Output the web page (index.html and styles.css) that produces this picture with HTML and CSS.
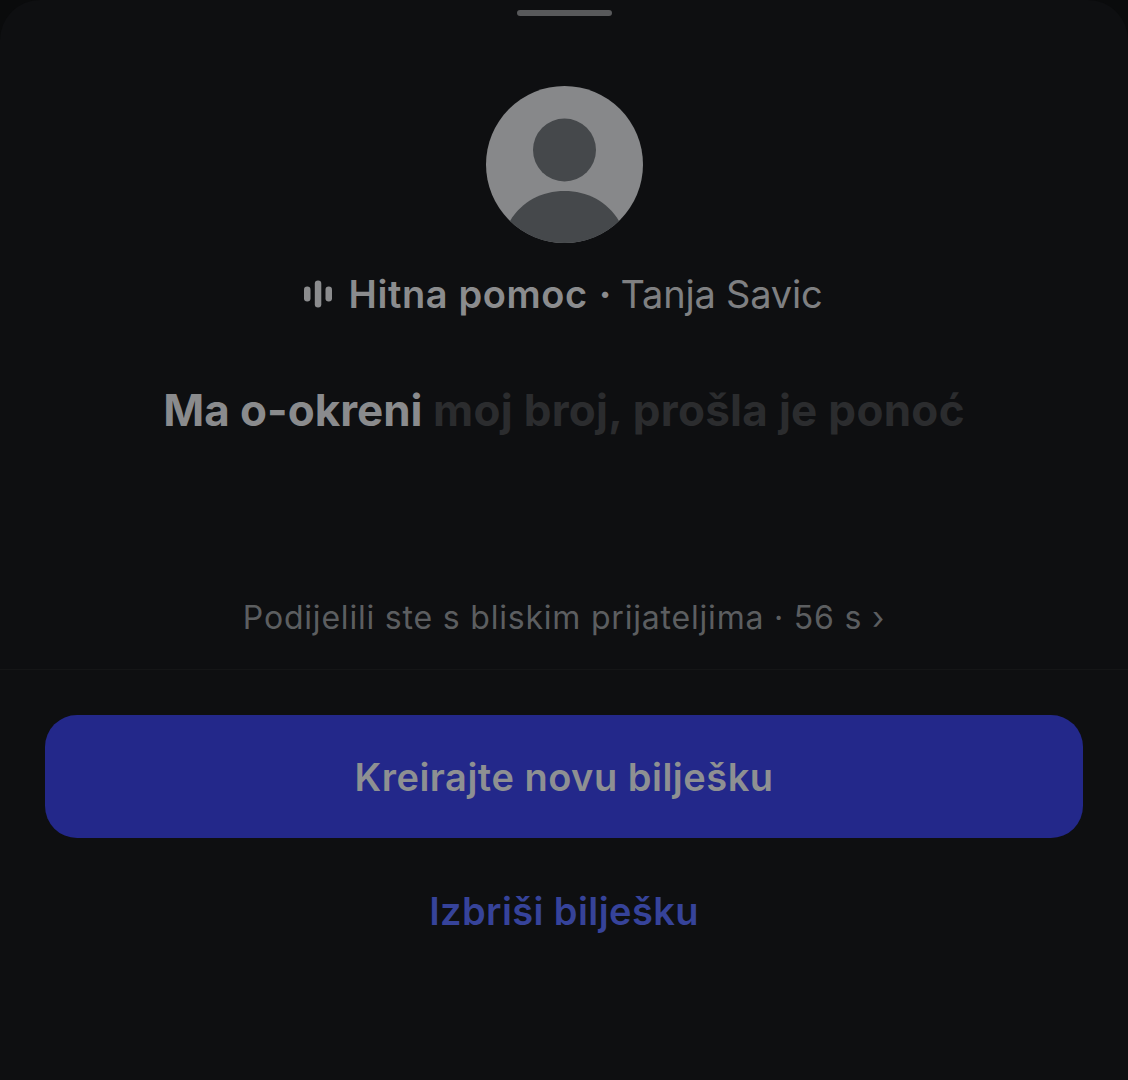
FILE: index.html
```html
<!DOCTYPE html>
<html lang="en">

<head>
    <meta charset="UTF-8">
    <meta name="viewport" content="width=device-width, initial-scale=1.0">
    <title>Bilješka</title>
    <link rel="stylesheet" href="styles.css">
</head>

<body>
    <div class="sheet">
        <div class="handle"></div>

        <div class="avatar">
            <svg viewBox="0 0 157 157" width="157" height="157">
                <circle cx="78.5" cy="78.5" r="78.5" fill="#87888a" />
                <circle cx="78.5" cy="64" r="31.5" fill="#45484b" />
                <path d="M24 135 C36 115 56 105 78.5 105 C101 105 121 115 133 135 C119 149 100 157 78.5 157 C57 157 38 149 24 135 Z" fill="#45484b" />
            </svg>
        </div>

        <div class="track">
            <svg class="track-icon" viewBox="0 0 28 28" width="28" height="28">
                <rect x="0" y="6.5" width="6.5" height="15" rx="3.2" />
                <rect x="10.8" y="0.5" width="6.5" height="27" rx="3.2" />
                <rect x="21.5" y="6.5" width="6.5" height="15" rx="3.2" />
            </svg>
            <span class="track-title">Hitna pomoc</span>
            <span class="track-dot">·</span>
            <span class="track-artist">Tanja Savic</span>
        </div>

        <p class="lyric"><span class="lyric-on">Ma o-okreni</span> <span class="lyric-off">moj broj, prošla je ponoć</span></p>

        <p class="share-info">Podijelili ste s bliskim prijateljima · 56 s ›</p>
    </div>

    <div class="actions">
        <button class="btn-primary">Kreirajte novu bilješku</button>
        <button class="btn-link">Izbriši bilješku</button>
    </div>
</body>

</html>
```

FILE: styles.css
```css
* {
    margin: 0;
    padding: 0;
    box-sizing: border-box;
}

body {
    font-family: Inter, 'Liberation Sans', sans-serif;
    background-color: #0a0b0c;
    height: 1080px;
    overflow: hidden;
}

/* Top part of the sheet */
.sheet {
    height: 670px;
    padding-top: 10px;
    display: flex;
    flex-direction: column;
    align-items: center;
    background-color: #0e0f11;
    border-radius: 40px 40px 0 0;
    border-bottom: 1px solid #151617;
}

.handle {
    width: 95px;
    height: 6px;
    border-radius: 3px;
    background-color: #58595b;
}

.avatar {
    width: 157px;
    height: 157px;
    margin-top: 70px;
}

.avatar svg {
    display: block;
}

.track {
    display: flex;
    align-items: center;
    margin-top: 27px;
    padding-right: 2px;
    height: 48px;
    font-size: 38px;
    color: #8b8c8e;
}

.track-icon {
    fill: #8b8c8e;
    margin-right: 17px;
}

.track-title {
    font-weight: 600;
    letter-spacing: 0.6px;
}

.track-dot {
    font-weight: 700;
    margin: 0 9px 0 11px;
}

.track-artist {
    font-weight: 400;
    letter-spacing: -0.2px;
    color: #7f8082;
}

.lyric {
    margin-top: 62px;
    height: 60px;
    font-size: 44px;
    line-height: 60px;
    font-weight: 700;
    white-space: nowrap;
}

.lyric-on {
    color: #8a8b8d;
}

.lyric-off {
    color: #2b2c2e;
    letter-spacing: 0.3px;
}

.share-info {
    margin-top: 158px;
    font-size: 32px;
    line-height: 40px;
    color: #5c5e60;
    letter-spacing: 0.8px;
}

/* Buttons */
.actions {
    height: 410px;
    padding: 45px 45px 0;
    display: flex;
    flex-direction: column;
    align-items: center;
    background-color: #0e0f11;
}

.btn-primary {
    width: 100%;
    height: 123px;
    border: none;
    border-radius: 32px;
    background-color: #23288a;
    color: #8e9092;
    font-family: inherit;
    font-size: 38px;
    font-weight: 600;
    letter-spacing: 0.5px;
}

.btn-link {
    margin-top: 48px;
    border: none;
    background: none;
    color: #36439a;
    font-family: inherit;
    font-size: 38px;
    font-weight: 600;
    letter-spacing: 0.4px;
    line-height: 50px;
}
```
